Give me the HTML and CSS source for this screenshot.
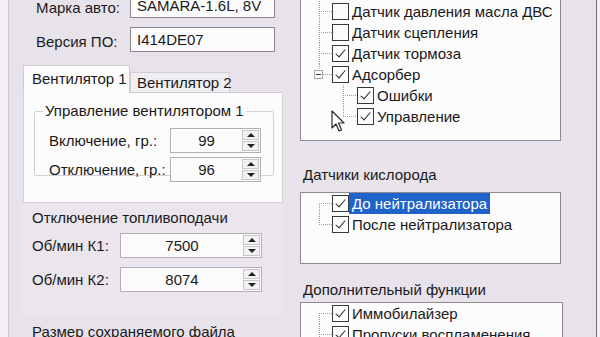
FILE: index.html
```html
<!DOCTYPE html>
<html lang="ru">
<head>
    <meta charset="UTF-8">
    <title>Настройки ЭБУ</title>
    <link rel="stylesheet" href="styles.css">
</head>
<body>
    <div class="window">
        <div class="edge"></div>

        <div class="left">
            <div class="field-row">
                <label>Марка авто:</label>
                <div class="textbox">SAMARA-1.6L, 8V</div>
            </div>
            <div class="field-row">
                <label>Версия ПО:</label>
                <div class="textbox">I414DE07</div>
            </div>

            <div class="tabs">
                <div class="tab-strip">
                    <div class="tab active">Вентилятор 1</div>
                    <div class="tab">Вентилятор 2</div>
                </div>
                <div class="tab-page">
                    <fieldset class="group">
                        <legend>Управление вентилятором 1</legend>
                        <div class="spin-row">
                            <span>Включение, гр.:</span>
                            <div class="spin fan">
                                <div class="spin-value">99</div>
                                <div class="spin-buttons"><span class="up"></span><span class="down"></span></div>
                            </div>
                        </div>
                        <div class="spin-row">
                            <span>Отключение, гр.:</span>
                            <div class="spin fan">
                                <div class="spin-value">96</div>
                                <div class="spin-buttons"><span class="up"></span><span class="down"></span></div>
                            </div>
                        </div>
                    </fieldset>
                </div>
            </div>

            <div class="panel fuel">
                <div class="caption">Отключение топливоподачи</div>
                <div class="spin-row">
                    <span>Об/мин К1:</span>
                    <div class="spin rpm">
                        <div class="spin-value">7500</div>
                        <div class="spin-buttons"><span class="up"></span><span class="down"></span></div>
                    </div>
                </div>
                <div class="spin-row">
                    <span>Об/мин К2:</span>
                    <div class="spin rpm">
                        <div class="spin-value">8074</div>
                        <div class="spin-buttons"><span class="up"></span><span class="down"></span></div>
                    </div>
                </div>
            </div>

            <div class="caption file-size">Размер сохраняемого файла</div>
        </div>

        <div class="right">
            <div class="tree tree-sensors">
                <div class="row"><span class="indent"></span><span class="conn mid"></span><span class="check"></span><span class="text">Датчик давления масла ДВС</span></div>
                <div class="row"><span class="indent"></span><span class="conn mid"></span><span class="check"></span><span class="text">Датчик сцепления</span></div>
                <div class="row"><span class="indent"></span><span class="conn mid"></span><span class="check on"></span><span class="text">Датчик тормоза</span></div>
                <div class="row"><span class="indent"></span><span class="conn last"><span class="expander"></span></span><span class="check on"></span><span class="text">Адсорбер</span></div>
                <div class="row"><span class="indent child"></span><span class="conn mid sub"></span><span class="check on"></span><span class="text">Ошибки</span></div>
                <div class="row"><span class="indent child"></span><span class="conn last sub"></span><span class="check on"></span><span class="text">Управление</span></div>

                <svg class="cursor" width="14" height="23" viewBox="0 0 14 23">
                    <path d="M1 1 L1 18 L5 14 L8 21 L10.5 20 L7.5 13 L13 13 Z" fill="#fff" stroke="#2a2a2a" stroke-width="1.2" stroke-linejoin="round"/>
                </svg>
            </div>

            <div class="caption">Датчики кислорода</div>
            <div class="tree tree-oxygen">
                <div class="row"><span class="indent"></span><span class="conn first"></span><span class="check on"></span><span class="text selected">До нейтрализатора</span></div>
                <div class="row"><span class="indent"></span><span class="conn last"></span><span class="check on"></span><span class="text">После нейтрализатора</span></div>
            </div>

            <div class="caption">Дополнительный функции</div>
            <div class="tree tree-extra">
                <div class="row"><span class="indent"></span><span class="conn first"></span><span class="check on"></span><span class="text">Иммобилайзер</span></div>
                <div class="row"><span class="indent"></span><span class="conn mid"></span><span class="check on"></span><span class="text">Пропуски воспламенения</span></div>
            </div>
        </div>

        <div class="right-edge"></div>
    </div>
</body>
</html>
```

FILE: styles.css
```css
body {
    margin: 0;
    height: 337px;
    background-color: #e8e2eb;
    font-family: "Liberation Sans", Arial, sans-serif;
    font-size: 15px;
    color: #1a1a1a;
    overflow: hidden;
}
.window {
    display: flex;
    margin-top: -7px;
    height: 344px;
    overflow: hidden;
}
.edge {
    width: 8px;
    background: #f3eff5;
    border-right: 1px solid #cdc6d0;
    flex-shrink: 0;
}

/* left column */
.left {
    width: 260px;
    padding-left: 14px;
    flex-shrink: 0;
}
.field-row {
    display: flex;
    align-items: center;
    padding-left: 13px;
    height: 25px;
    margin-bottom: 9px;
}
.field-row label {
    width: 94px;
    padding-top: 3px;
}
.textbox {
    width: 137px;
    height: 23px;
    line-height: 23px;
    padding-left: 6px;
    background: #fdfcfd;
    border: 1px solid #8a868c;
}

.tabs {
    margin-top: 13px;
}
.tab-strip {
    display: flex;
    align-items: flex-end;
    height: 27px;
}
.tab {
    box-sizing: border-box;
    width: 100px;
    height: 20px;
    line-height: 20px;
    padding-left: 6px;
    white-space: nowrap;
    background: #f1eef2;
    border: 1px solid #d3ced5;
    border-bottom: none;
}
.tab.active {
    width: 107px;
    height: 28px;
    line-height: 26px;
    padding-left: 8px;
    background: #fdfcfd;
    border-color: #cfcad1;
    position: relative;
    z-index: 1;
    margin-bottom: -1px;
}
.tab-page {
    height: 109px;
    background: #fdfcfd;
    border: 1px solid #d6d1d8;
    border-top-color: #cfcad1;
}
.group {
    margin: 9px 8px 0 10px;
    padding: 0 12px 0 14px;
    height: 72px;
    border: 1px solid #d4d0d6;
    border-radius: 2px;
}
.group legend {
    margin-left: -6px;
    padding: 0 2px;
    line-height: 18px;
}

.spin-row {
    display: flex;
    align-items: center;
    justify-content: space-between;
    height: 25px;
}
.group .spin-row:first-of-type {
    margin-top: 8px;
}
.group .spin-row + .spin-row {
    margin-top: 4px;
}
.spin {
    display: flex;
    height: 23px;
    background: #fdfcfd;
    border: 1px solid #b3afb5;
}
.spin.fan {
    width: 89px;
}
.spin.rpm {
    width: 140px;
}
.spin-value {
    flex: 1;
    text-align: center;
    line-height: 23px;
}
.spin-buttons {
    width: 17px;
    display: flex;
    flex-direction: column;
    gap: 1px;
    padding: 1px 1px 1px 0;
}
.spin-buttons span {
    flex: 1;
    background: #f2f0f3;
    border: 1px solid #cac6cc;
    display: flex;
    align-items: center;
    justify-content: center;
}
.spin-buttons .up::before {
    content: "";
    border-left: 4px solid transparent;
    border-right: 4px solid transparent;
    border-bottom: 4px solid #222;
}
.spin-buttons .down::before {
    content: "";
    border-left: 4px solid transparent;
    border-right: 4px solid transparent;
    border-top: 4px solid #222;
}

.panel.fuel {
    margin: 1px 0 0 -1px;
    padding: 5px 21px 23px 10px;
    background: #ebe6ee;
}
.caption {
    line-height: 18px;
    white-space: nowrap;
}
.fuel .caption {
    margin-bottom: 6px;
}
.fuel .spin-row + .spin-row {
    margin-top: 9px;
}
.file-size {
    margin: 8px 0 0 9px;
}

/* right column */
.right {
    flex: 1;
    padding-left: 17px;
}
.right .caption {
    padding-left: 3px;
}
.tree {
    width: 261px;
    background: #fdfcfd;
    border: 1px solid #8e8a90;
    position: relative;
}
.tree-sensors {
    height: 148px;
    padding-top: 7px;
    box-sizing: border-box;
    margin-bottom: 25px;
}
.tree-oxygen {
    height: 72px;
    box-sizing: border-box;
    margin: 8px 0 17px;
}
.tree-extra {
    margin-top: 3px;
    height: 60px;
}
.row {
    display: flex;
    align-items: center;
    height: 21px;
}
.indent {
    width: 18px;
    align-self: stretch;
}
.indent.child {
    width: 42px;
}
.conn {
    width: 13px;
    align-self: stretch;
    position: relative;
    background-repeat: no-repeat;
    background-image:
        repeating-linear-gradient(to bottom, #a09ca2 0 1px, transparent 1px 2px),
        repeating-linear-gradient(to right, #a09ca2 0 1px, transparent 1px 2px);
    background-size: 1px 100%, 100% 1px;
    background-position: 0 0, 0 10px;
}
.conn.sub {
    width: 14px;
}
.conn.last {
    background-size: 1px 11px, 100% 1px;
}
.conn.first {
    background-size: 1px 11px, 100% 1px;
    background-position: 0 10px, 0 10px;
}
.expander {
    position: absolute;
    left: -5px;
    top: 6px;
    width: 9px;
    height: 9px;
    box-sizing: border-box;
    background: #fdfcfd;
    border: 1px solid #a9a5ab;
}
.expander::after {
    content: "";
    position: absolute;
    left: 1px;
    top: 3px;
    width: 5px;
    height: 1px;
    background: #333;
}
.check {
    width: 15px;
    height: 15px;
    border: 1px solid #3a373c;
    background: #fdfcfd;
    flex-shrink: 0;
    position: relative;
}
.check.on::after {
    content: "";
    position: absolute;
    left: 5px;
    top: 1px;
    width: 4px;
    height: 9px;
    border-right: 1.6px solid #2a2a2a;
    border-bottom: 1.6px solid #2a2a2a;
    transform: rotate(40deg);
}
.text {
    margin-left: 0;
    padding: 0 3px;
    line-height: 21px;
    white-space: nowrap;
}
.text.selected {
    background: #1f63c8;
    color: #fff;
}
.cursor {
    position: absolute;
    left: 30px;
    top: 116px;
}

.right-edge {
    width: 3px;
    flex-shrink: 0;
    background: #f4f0f5;
    border-left: 1px solid #6f6b72;
}
```
